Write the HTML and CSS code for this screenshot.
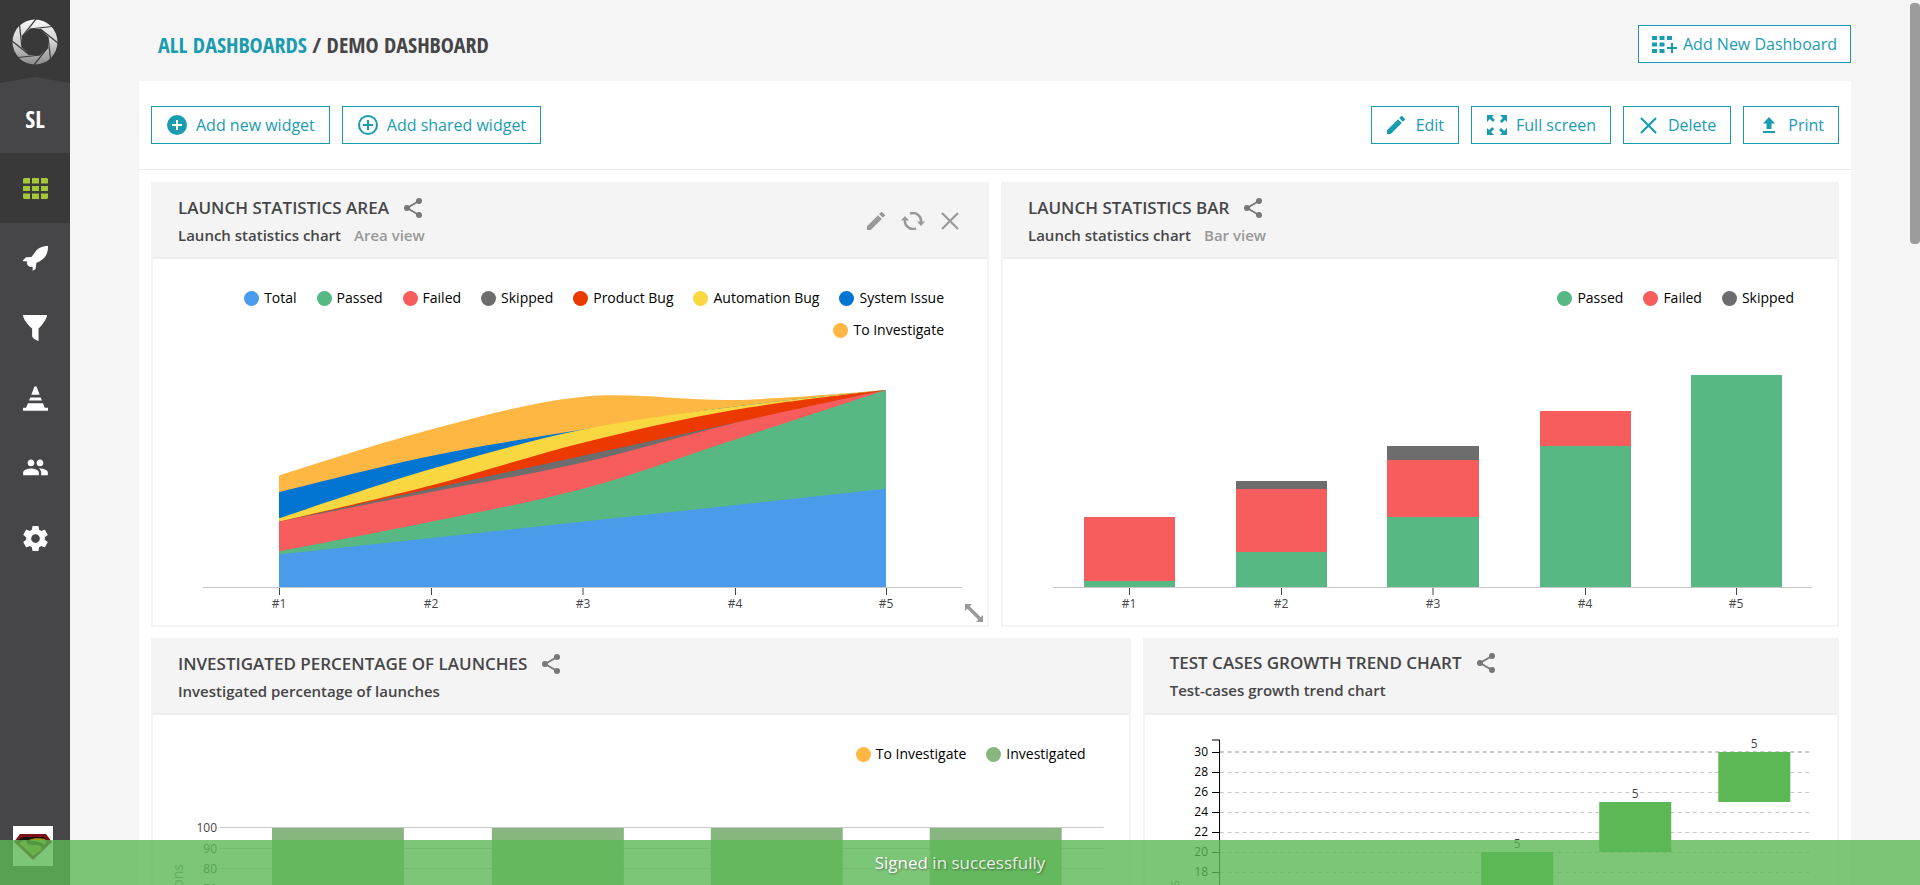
FILE: index.html
```html
<!DOCTYPE html>
<html lang="en">
<head>
<meta charset="utf-8">
<title>Demo Dashboard</title>
<link rel="stylesheet" href="styles.css">
</head>
<body>
<svg class="defs" width="0" height="0" aria-hidden="true">
  <symbol id="share" viewBox="0 0 18 20"><path d="M15 3L3 10l12 7" fill="none" stroke="currentColor" stroke-width="1.800"/><circle cx="15" cy="3" r="3"/><circle cx="3" cy="10" r="3"/><circle cx="15" cy="17" r="3"/></symbol>
  <symbol id="pencil" viewBox="3 3 18 18"><path d="M3 17.250V21h3.750L17.810 9.940l-3.750-3.750L3 17.250zM20.710 7.040a1 1 0 0 0 0-1.410l-2.340-2.340a1 1 0 0 0-1.410 0l-1.830 1.830 3.750 3.750 1.830-1.830z"/></symbol>
  <symbol id="cross" viewBox="0 0 18 18"><path d="M1 1l16 16M17 1L1 17" fill="none" stroke="currentColor" stroke-width="2.200"/></symbol>
</svg>
<div class="app">
  <nav class="sidebar">
    <a class="logo" href="#" aria-label="Home">
      <svg width="46" height="46" viewBox="-23 -23 46 46">
        <defs>
          <linearGradient id="metal" x1="0" y1="0" x2="0" y2="1"><stop offset="0" stop-color="#fafafa"/><stop offset=".5" stop-color="#cfcfcf"/><stop offset="1" stop-color="#8c8c8c"/></linearGradient>
          <path id="blade" d="M-5.400 -13L17 -15.500" stroke="#393939" stroke-width="1.200"/>
        </defs>
        <circle r="22.500" fill="url(#metal)"/>
        <path d="M-5.400 -13H5.400L13 -5.400V5.400L5.400 13H-5.400L-13 5.400V-5.400Z" fill="#393939"/>
        <use href="#blade"/><use href="#blade" transform="rotate(45)"/><use href="#blade" transform="rotate(90)"/><use href="#blade" transform="rotate(135)"/><use href="#blade" transform="rotate(180)"/><use href="#blade" transform="rotate(225)"/><use href="#blade" transform="rotate(270)"/><use href="#blade" transform="rotate(315)"/>
      </svg>
    </a>
    <a class="nav-item project" href="#">SL</a>
    <a class="nav-item active" href="#" aria-label="Dashboards"><svg width="25" height="21" viewBox="0 0 25 21"><path d="M1 0h6v5.400H0V1zM9 0h7v5.400H9zM18 0h6l1 1v4.400h-7zM0 8h7v5H0zM9 8h7v5H9zM18 8h7v5h-7zM0 15.600h7V21H1l-1-1zM9 15.600h7V21H9zM18 15.600h7V20l-1 1h-6z"/></svg></a>
    <a class="nav-item" href="#" aria-label="Launches"><svg width="25" height="25" viewBox="0 0 75 75"><path d="M75 0C57 0 42 6 34 22L25 33 9 34 0 43v3h10l3 3-2 3 3 6 7 5 5-1 3 2v11l9-7 2-17C63 42 76 26 75 0z"/></svg></a>
    <a class="nav-item" href="#" aria-label="Filters"><svg width="24" height="26" viewBox="0 0 71 77"><path d="M0 0h71c0 10-12 28-25 40v37C38 76 30 70 27 64V40C12 28 0 10 0 0z"/></svg></a>
    <a class="nav-item" href="#" aria-label="Debug"><svg width="25" height="25" viewBox="0 0 75 74"><path d="M34 2q4-4 7 0l9 24H25zM22 34h31l4 9H18zM15 51h45l5 14h10v9H0v-9h9z"/></svg></a>
    <a class="nav-item" href="#" aria-label="Members"><svg width="27" height="27" viewBox="0 1 24 24"><path d="M16 11c1.660 0 2.990-1.340 2.990-3S17.660 5 16 5c-1.660 0-3 1.340-3 3s1.340 3 3 3zm-8 0c1.660 0 2.990-1.340 2.990-3S9.660 5 8 5C6.340 5 5 6.340 5 8s1.340 3 3 3zm0 2c-2.330 0-7 1.170-7 3.500V19h14v-2.500c0-2.330-4.670-3.500-7-3.500zm8 0c-.29 0-.62.02-.97.05 1.160.84 1.970 1.970 1.970 3.450V19h6v-2.500c0-2.330-4.670-3.500-7-3.500z"/></svg></a>
    <a class="nav-item" href="#" aria-label="Settings"><svg width="25" height="25" viewBox="2 2 20 20"><path d="M19.430 12.980c.04-.32.07-.64.07-.98s-.03-.66-.07-.98l2.110-1.650c.19-.15.24-.42.12-.64l-2-3.460c-.12-.22-.39-.3-.61-.22l-2.490 1c-.52-.4-1.080-.73-1.690-.98l-.38-2.650C14.460 2.180 14.250 2 14 2h-4c-.25 0-.46.18-.49.42l-.38 2.650c-.61.25-1.170.59-1.690.98l-2.490-1c-.23-.09-.49 0-.61.22l-2 3.460c-.13.22-.07.49.12.64l2.110 1.650c-.04.32-.07.65-.07.98s.03.66.07.98l-2.110 1.650c-.19.15-.24.42-.12.64l2 3.460c.12.22.39.3.61.22l2.490-1c.52.4 1.080.73 1.690.98l.38 2.650c.03.24.24.42.49.42h4c.25 0 .46-.18.49-.42l.38-2.650c.61-.25 1.170-.59 1.690-.98l2.490 1c.23.09.49 0 .61-.22l2-3.460c.12-.22.07-.49-.12-.64l-2.110-1.650zM12 15.500c-1.930 0-3.500-1.570-3.500-3.500s1.570-3.500 3.500-3.500 3.500 1.570 3.500 3.500-1.570 3.500-3.500 3.500z"/></svg></a>
    <a class="avatar" href="#" aria-label="Profile">
      <svg width="40" height="40" viewBox="0 0 40 40"><rect width="40" height="40" fill="#fff"/><path d="M7 8h26l6 8-19 18L1 16z" fill="#7d0d16"/><path d="M9 11h22l5 5-16 15L4 16z" fill="#151208"/><path d="M6 17l5-3 3 1c-1 3 3 4 8 4 6 0 8 2 6 5l-8 6zM16 14c3-2 11-2 16-1l2 3-3 3c-3-3-8-4-12-4z" fill="#a3951c"/></svg>
    </a>
  </nav>
  <main class="page">
    <header class="page-head">
      <h1 class="crumbs"><a href="#">ALL DASHBOARDS</a> <span>/ DEMO DASHBOARD</span></h1>
      <button class="btn btn-wide"><svg width="25" height="17" viewBox="0 0 25 17"><path d="M0 0h5v4H0zM7.500 0h5v4h-5zM15 0h5v4h-5zM0 6.500h5v4H0zM7.500 6.500h5v4h-5zM0 13h5v4H0zM7.500 13h5v4h-5zM19 7h2v4h4v2h-4v4h-2v-4h-4v-2h4z"/></svg>Add New Dashboard</button>
    </header>
    <section class="panel">
      <div class="toolbar">
        <button class="btn"><svg width="22" height="22" viewBox="0 0 22 22"><circle cx="11" cy="11" r="10"/><path d="M11 6v10M6 11h10" stroke="#fff" stroke-width="2"/></svg>Add new widget</button>
        <button class="btn"><svg width="22" height="22" viewBox="0 0 22 22"><g fill="none" stroke="currentColor" stroke-width="2"><circle cx="11" cy="11" r="9"/><path d="M11 6v10M6 11h10"/></g></svg>Add shared widget</button>
        <span class="spacer"></span>
        <button class="btn"><svg width="22" height="22" viewBox="0 0 22 22"><use href="#pencil" x="1" y="2" width="18" height="18"/></svg>Edit</button>
        <button class="btn"><svg width="22" height="22" viewBox="0 0 22 22"><path id="fs" d="M1 1h7L5.900 3.100l3 3-2 2-3-3L1 8z"/><use href="#fs" transform="rotate(90 11 11)"/><use href="#fs" transform="rotate(180 11 11)"/><use href="#fs" transform="rotate(270 11 11)"/></svg>Full screen</button>
        <button class="btn"><svg width="22" height="22" viewBox="0 0 22 22"><use href="#cross" x="2" y="3" width="17" height="17"/></svg>Delete</button>
        <button class="btn"><svg width="22" height="22" viewBox="0 0 22 22"><path d="M11 3l6 6.500h-3.500V15h-5V9.500H5zM5 17h12v2H5z"/></svg>Print</button>
      </div>
      <div class="grid">
        <article class="widget half">
          <header class="widget-head">
            <div class="widget-info">
              <h2>LAUNCH STATISTICS AREA<svg width="18" height="20"><use href="#share"/></svg></h2>
              <p><b>Launch statistics chart</b><span>Area view</span></p>
            </div>
            <div class="controls">
              <button aria-label="Edit widget"><svg width="18" height="18"><use href="#pencil"/></svg></button>
              <button aria-label="Refresh widget"><svg width="24" height="18" viewBox="0 0 24 18"><path d="M9 1.600A8 8 0 0 1 20 10M15 16.400A8 8 0 0 1 4 8" fill="none" stroke="currentColor" stroke-width="2.500"/><path d="M16 9.500h8l-4 4.500zM0 8.500h8L4 4z"/></svg></button>
              <button aria-label="Remove widget"><svg width="18" height="18"><use href="#cross"/></svg></button>
            </div>
          </header>
          <div class="widget-body">
            <ul class="legend">
              <li class="c-total">Total</li><li class="c-passed">Passed</li><li class="c-failed">Failed</li><li class="c-skipped">Skipped</li><li class="c-product">Product Bug</li><li class="c-auto">Automation Bug</li><li class="c-system">System Issue</li><li class="c-investigate">To Investigate</li>
            </ul>
            <svg class="chart" viewBox="0 0 834 279">
              <path class="c-investigate" d="M126 129.600C126 129.600 227 96.800 278 83.600S379 55.600 430 50.700S531 55.100 582 54S733 44.100 733 44.100V241H126z"/>
              <path class="c-system" d="M126 146.100C126 146.100 227 120.300 278 109.900S379 91.800 430 83.600S531 67.200 582 60.600S733 44.100 733 44.100V241H126z"/>
              <path class="c-auto" d="M126 172.400C126 172.400 227 137.900 278 123.100S379 94 430 83.600S531 67.200 582 60.600S733 44.100 733 44.100V241H126z"/>
              <path class="c-product" d="M126 175.700C126 175.700 227 152.700 278 139.500S379 109.300 430 96.700S531 72.600 582 63.800S733 44.100 733 44.100V241H126z"/>
              <path class="c-skipped" d="M126 175.700L733 44.100V241H126z"/>
              <path class="c-failed" d="M126 175.700C126 175.700 227 156 278 146.100S379 128 430 116.500S531 89.100 582 77S733 44.100 733 44.100V241H126z"/>
              <path class="c-passed" d="M126 205.300C126 205.300 227 186.100 278 175.700S379 156.500 430 142.800S531 110 582 93.500S733 44.100 733 44.100V241H126z"/>
              <path class="c-total" d="M126 208.600L733 142.800V241H126z"/>
              <path class="axis" d="M50 241.500H809"/>
              <path class="tick" d="M126.500 242v7M278.500 242v7M430 242v7M582.500 242v7M733.500 242v7"/>
              <g class="x-labels"><text x="126" y="262">#1</text><text x="278" y="262">#2</text><text x="430" y="262">#3</text><text x="582" y="262">#4</text><text x="733" y="262">#5</text></g>
            </svg>
            <svg class="resize" width="18" height="18" viewBox="0 0 18 18"><path d="M0 0h7L4.700 2.300l11 11L18 11v7h-7l2.300-2.300-11-11L0 7z"/></svg>
          </div>
        </article>

        <article class="widget half">
          <header class="widget-head">
            <div class="widget-info">
              <h2>LAUNCH STATISTICS BAR<svg width="18" height="20"><use href="#share"/></svg></h2>
              <p><b>Launch statistics chart</b><span>Bar view</span></p>
            </div>
          </header>
          <div class="widget-body">
            <ul class="legend"><li class="c-passed">Passed</li><li class="c-failed">Failed</li><li class="c-skipped">Skipped</li></ul>
            <svg class="chart" viewBox="0 0 834 279">
              <path class="c-passed" d="M81 235h91v6H81zM233 206h91v35h-91zM384 171h92v70h-92zM537 100h91v141h-91zM688 29h91v212h-91z"/>
              <path class="c-failed" d="M81 171h91v64H81zM233 143h91v63h-91zM384 114h92v57h-92zM537 65h91v35h-91z"/>
              <path class="c-skipped" d="M233 135h91v8h-91zM384 100h92v14h-92z"/>
              <path class="axis" d="M50 241.500H809"/>
              <path class="tick" d="M126.500 242v7M278.500 242v7M430 242v7M582.500 242v7M733.500 242v7"/>
              <g class="x-labels"><text x="126" y="262">#1</text><text x="278" y="262">#2</text><text x="430" y="262">#3</text><text x="582" y="262">#4</text><text x="733" y="262">#5</text></g>
            </svg>
          </div>
        </article>

        <article class="widget seven">
          <header class="widget-head">
            <div class="widget-info">
              <h2>INVESTIGATED PERCENTAGE OF LAUNCHES<svg width="18" height="20"><use href="#share"/></svg></h2>
              <p><b>Investigated percentage of launches</b></p>
            </div>
          </header>
          <div class="widget-body">
            <ul class="legend"><li class="c-investigate">To Investigate</li><li class="c-investigated">Investigated</li></ul>
            <svg class="chart" viewBox="0 0 976 311">
              <path class="axis" d="M67 57.500H951M67 78.500H951M67 98.500H951M67 119.500H951M67 139.500H951"/>
              <path class="c-investigated" d="M119 58h132v204H119zM339 58h132v204H339zM558 58h132v204H558zM777 58h132v204H777z"/>
              <g class="y-labels"><text x="64" y="62">100</text><text x="64" y="83">90</text><text x="64" y="103">80</text><text x="64" y="123">70</text></g>
              <text class="y-title" transform="translate(30 94) rotate(-90)">% of investigations</text>
            </svg>
          </div>
        </article>

        <article class="widget five">
          <header class="widget-head">
            <div class="widget-info">
              <h2>TEST CASES GROWTH TREND CHART<svg width="18" height="20"><use href="#share"/></svg></h2>
              <p><b>Test-cases growth trend chart</b></p>
            </div>
          </header>
          <div class="widget-body flush">
            <svg class="chart" viewBox="0 0 692 366">
              <path class="dashes" d="M75 36.500H664M75 37.500H664M75 57.500H664M75 77.500H664M75 97.500H664M75 117.500H664M75 137.500H664M75 157.500H664"/>
              <path class="growth" d="M336 137h72v50h-72zM454 87h72v50h-72zM573 37h72v50h-72z"/>
              <path class="y-axis" d="M67 25h7.500V366M67 37.500h7M67 57.500h7M67 77.500h7M67 97.500h7M67 117.500h7M67 137.500h7M67 157.500h7"/>
              <g class="y-numbers"><text x="63" y="41">30</text><text x="63" y="61">28</text><text x="63" y="81">26</text><text x="63" y="101">24</text><text x="63" y="121">22</text><text x="63" y="141">20</text><text x="63" y="161">18</text></g>
              <g class="x-labels"><text x="372" y="133">5</text><text x="490" y="83">5</text><text x="609" y="33">5</text></g>
              <text class="y-title" transform="translate(34 165) rotate(-90)">cases</text>
            </svg>
          </div>
        </article>
      </div>
    </section>
  </main>
</div>
<div class="scroll-thumb"></div>
<div class="toast" role="status">Signed in successfully</div>
</body>
</html>
```
FILE: styles.css
```css
* { box-sizing: border-box; }
body {
  margin: 0;
  background: #f5f5f5;
  color: #464547;
  font-family: "Open Sans", "Noto Sans", sans-serif;
  font-size: 14px;
}
a { color: inherit; text-decoration: none; }
svg { fill: currentColor; flex: none; }
.defs { position: absolute; }
.app { display: flex; height: 100vh; overflow: hidden; }

.sidebar {
  display: flex;
  flex-direction: column;
  flex: none;
  width: 70px;
  background: #464547;
  color: #fff;
}
.logo {
  display: flex;
  justify-content: center;
  height: 83px;
  padding-top: 19px;
  background: #393939;
  clip-path: polygon(0 0, 100% 0, 100% 100%, 50% 77px, 0 100%);
}
.nav-item { display: flex; align-items: center; justify-content: center; height: 70px; }
.project {
  font-family: "Open Sans Condensed", "Liberation Sans Narrow", "Open Sans", sans-serif;
  font-size: 24px;
  font-weight: 700;
}
.active { background: #393939; color: #a4c639; }
.avatar { display: flex; margin: auto 0 19px 13px; }

.page { flex: 1; min-width: 0; padding: 0 69px; }
.page-head {
  display: flex;
  align-items: center;
  justify-content: space-between;
  height: 81px;
  padding: 0 0 0 19px;
}
.page-head .btn { margin-top: 7px; }
.crumbs {
  margin: 7px 0 0;
  font-family: "Open Sans Condensed", "Liberation Sans Narrow", "Open Sans", sans-serif;
  font-size: 22px;
  font-weight: 700;
  line-height: 30px;
}
.crumbs a { color: #1a9cb0; }
.btn {
  display: inline-flex;
  align-items: center;
  gap: 8px;
  height: 38px;
  padding: 0 14px;
  border: 1px solid #1a9cb0;
  background: #fff;
  color: #1a9cb0;
  font: 16px/20px "Open Sans", sans-serif;
}
.btn-wide { gap: 6px; padding: 0 13px; }

.panel { background: #fff; }
.toolbar {
  display: flex;
  gap: 12px;
  padding: 25px 12px;
  border-bottom: 1px solid #e9e9e9;
}
.spacer { flex: 1; }
.grid {
  display: grid;
  grid-template-columns: repeat(12, 1fr);
  grid-auto-rows: 445px;
  gap: 11px 12px;
  padding: 12px;
}
.widget { display: flex; flex-direction: column; min-width: 0; border: 2px solid #f3f3f3; }
.half { grid-column: span 6; }
.seven { grid-column: span 7; }
.five { grid-column: span 5; }
.widget-head {
  display: flex;
  align-items: center;
  justify-content: space-between;
  height: 75px;
  padding: 0 28px 0 25px;
  border-bottom: 2px solid #eee;
  background: #f4f4f4;
}
.widget-head h2 {
  display: flex;
  align-items: center;
  gap: 15px;
  margin: 0;
  font-size: 17px;
  font-weight: 600;
  line-height: 28px;
}
.widget-head h2 svg { color: #777; }
.widget-head p {
  display: flex;
  gap: 13px;
  margin: 0;
  font-size: 15px;
  font-weight: 600;
  line-height: 26px;
}
.widget-head b { font-weight: 600; }
.widget-head span { color: #999; }
.controls { display: flex; gap: 16px; color: #999; }
.controls button { display: flex; padding: 0; border: 0; background: none; color: inherit; }

.widget-body { position: relative; display: flex; flex-direction: column; flex: 1; padding-top: 23px; }
.widget-body.flush { padding-top: 0; }
.legend {
  display: flex;
  flex-wrap: wrap;
  justify-content: flex-end;
  column-gap: 20px;
  margin: 0;
  padding: 0 43px 0 50px;
  list-style: none;
  line-height: 32px;
}
.legend li { display: flex; align-items: center; gap: 5px; color: #000; }
.legend li::before { content: ""; width: 15px; height: 15px; border-radius: 50%; background: var(--series); }
.chart { display: block; width: 100%; margin-top: auto; }
.chart path { fill: var(--series); }
.c-total { --series: #4a9bea; }
.c-passed { --series: #57b884; }
.c-failed { --series: #f75d5d; }
.c-skipped { --series: #6d6d6d; }
.c-product { --series: #ec3900; }
.c-auto { --series: #f8d740; }
.c-system { --series: #0274d1; }
.c-investigate { --series: #ffb743; }
.c-investigated { --series: #87b77f; }
.growth { --series: #5cb855; }
.chart .axis { fill: none; stroke: #c8c8c8; stroke-width: 1; }
.chart .tick { fill: none; stroke: #464547; stroke-width: 1; }
.chart .y-axis { fill: none; stroke: #000; stroke-width: 1; }
.chart .dashes { fill: none; stroke: #c8c8c8; stroke-dasharray: 4 3.5; }
.chart text { font-size: 12px; fill: #464547; }
.x-labels { text-anchor: middle; }
.y-labels, .y-numbers, .y-title { text-anchor: end; }
.chart .y-numbers text { fill: #000; }
.chart .y-title { font-size: 14px; fill: #777; }
.resize { position: absolute; right: 4px; bottom: 3px; color: #999; }

.scroll-thumb {
  position: fixed;
  top: 3px;
  right: 0;
  width: 10px;
  height: 241px;
  border-radius: 4px;
  background: #9b9b9b;
}
.toast {
  position: fixed;
  right: 0;
  bottom: 0;
  left: 0;
  background: #5cb855;
  color: #fff;
  opacity: .8;
  font-size: 17px;
  line-height: 45px;
  text-align: center;
  text-shadow: 1px 1px 2px rgba(0, 0, 0, .5);
}
```
